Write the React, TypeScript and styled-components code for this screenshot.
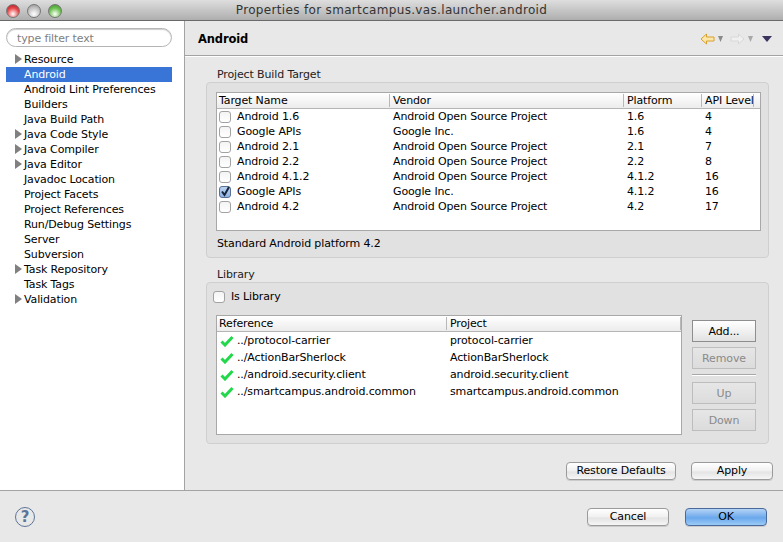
import * as React from "react";
import styled, { createGlobalStyle } from "styled-components";

const GlobalStyle = createGlobalStyle`
  html, body {
    margin: 0;
    padding: 0;
    background: #e8e8e8;
  }
  body {
    font-family: "DejaVu Sans", sans-serif;
    font-size: 11px;
    letter-spacing: -0.13px;
    color: #000;
  }
`;

const Window = styled.div`
  width: 783px;
  height: 542px;
  display: flex;
  flex-direction: column;
  overflow: hidden;
`;

const TitleBar = styled.div`
  height: 20px;
  flex: none;
  display: flex;
  align-items: center;
  position: relative;
  justify-content: center;
  background: linear-gradient(#dedede, #aeaeae);
  border-bottom: 1px solid #6a6a6a;
`;

const TrafficLights = styled.div`
  position: absolute;
  left: 6px;
  top: 4px;
  display: flex;
  gap: 7px;
`;

const Light = styled.span<{ $color: string; $edge: string }>`
  width: 12px;
  height: 12px;
  border-radius: 50%;
  background: radial-gradient(circle at 50% 75%, #fff 0%, ${(p) => p.$color} 55%, ${(p) => p.$edge} 100%);
  border: 0.5px solid #777;
`;

const Title = styled.div`
  font-size: 12px;
  color: #333;
  letter-spacing: 0.33px;
`;

const Main = styled.div`
  height: 470px;
  flex: none;
  box-sizing: border-box;
  display: flex;
  border-bottom: 1px solid #a3a3a3;
`;

const Sidebar = styled.div`
  width: 185px;
  flex: none;
  background: #fff;
  border-right: 1px solid #a3a3a3;
  padding: 7px 12px 0 6px;
  box-sizing: border-box;
`;

const Filter = styled.div`
  height: 19px;
  width: 166px;
  box-sizing: border-box;
  border: 1px solid #b5b5b5;
  border-radius: 10px;
  box-shadow: inset 0 1px 1px #ccc;
  padding-left: 10px;
  line-height: 19px;
  color: #808080;
  margin-bottom: 5px;
`;

const TreeRow = styled.div<{ $selected?: boolean }>`
  height: 15px;
  width: 166px;
  line-height: 15px;
  display: flex;
  align-items: center;
  padding-left: 18px;
  box-sizing: border-box;
  position: relative;
  white-space: nowrap;
  background: ${(p) => (p.$selected ? "#3875d7" : "transparent")};
  color: ${(p) => (p.$selected ? "#fff" : "#000")};
`;

const Twisty = styled.span`
  position: absolute;
  left: 9px;
  top: 2px;
  width: 0;
  height: 0;
  border-left: 7px solid #808080;
  border-top: 5px solid transparent;
  border-bottom: 5px solid transparent;
`;

const Content = styled.div`
  flex: 1;
  min-width: 0;
  display: flex;
  flex-direction: column;
  background: #e8e8e8;
`;

const Header = styled.div`
  height: 35px;
  flex: none;
  box-sizing: border-box;
  display: flex;
  align-items: center;
  justify-content: space-between;
  padding: 2px 11px 0 13px;
  border-bottom: 1px solid #a3a3a3;
  box-shadow: 0 1px 0 #fff;
`;

const HeaderTitle = styled.div`
  font-weight: bold;
  font-size: 11.5px;
`;

const NavIcons = styled.div`
  display: flex;
  align-items: center;
`;

const NavGap = styled.span<{ $width: number }>`
  width: ${(p) => p.$width}px;
`;

const Body = styled.div`
  flex: 1;
  padding: 11px 14px 0 21px;
  display: flex;
  flex-direction: column;
`;

const GroupLabel = styled.div`
  height: 15px;
  line-height: 15px;
  padding-left: 11px;
  color: #222;
`;

const GroupBox = styled.div<{ $height: number }>`
  height: ${(p) => p.$height}px;
  box-sizing: border-box;
  background: #e1e1e1;
  border: 1px solid #cfcfcf;
  border-radius: 4px;
  padding: 9px 7px 0 9px;
  margin-bottom: 9px;
`;

const Table = styled.div<{ $height: number; $width?: number }>`
  height: ${(p) => p.$height}px;
  ${(p) => (p.$width ? `width: ${p.$width}px;` : "")}
  flex: none;
  box-sizing: border-box;
  background: #fff;
  border: 1px solid #a8a8a8;
`;

const TableHead = styled.div`
  height: 15px;
  display: flex;
  align-items: center;
  background: linear-gradient(#fff, #ececec);
  border-bottom: 1px solid #b5b5b5;
`;

const HeadCell = styled.div<{ $width: number }>`
  width: ${(p) => p.$width}px;
  flex: none;
  box-sizing: border-box;
  padding-left: 3px;
  height: 13px;
  line-height: 13px;
  border-right: 1px solid #b8b8b8;
  white-space: nowrap;

  &:first-child {
    padding-left: 2px;
  }
`;

const TableRow = styled.div<{ $height: number }>`
  height: ${(p) => p.$height}px;
  display: flex;
  align-items: center;
  white-space: nowrap;
`;

const Cell = styled.div<{ $width: number }>`
  width: ${(p) => p.$width}px;
  flex: none;
  box-sizing: border-box;
  padding-left: 3px;
  display: flex;
  align-items: center;
`;

const Checkbox = styled.span<{ $checked?: boolean }>`
  width: 12px;
  height: 12px;
  flex: none;
  box-sizing: border-box;
  border-radius: 3px;
  display: inline-flex;
  align-items: center;
  justify-content: center;
  border: 1px solid ${(p) => (p.$checked ? "#5a6f94" : "#a2a2a2")};
  background: ${(p) =>
    p.$checked ? "linear-gradient(#bcd3f0, #8fb3e6)" : "linear-gradient(#f4f4f4, #fff)"};
`;

const RowCheck = styled(Checkbox)`
  margin: 0 6px 0 -1px;
`;

const Note = styled.div`
  margin-top: 5px;
  height: 15px;
  line-height: 15px;
  padding-left: 1px;
`;

const CheckLine = styled.div`
  display: flex;
  align-items: center;
  gap: 6px;
  height: 15px;
  margin: -3px 0 11px -3px;
`;

const LibraryRow = styled.div`
  display: flex;
  gap: 10px;
`;

const SideButtons = styled.div`
  width: 64px;
  flex: none;
  padding-top: 5px;
  display: flex;
  flex-direction: column;
`;

const SquareButton = styled.div<{ $disabled?: boolean }>`
  height: 22px;
  box-sizing: border-box;
  line-height: 21px;
  text-align: center;
  border: 1px solid ${(p) => (p.$disabled ? "#bdbdbd" : "#8e8e8e")};
  background: ${(p) =>
    p.$disabled ? "linear-gradient(#e6e6e6, #dcdcdc)" : "linear-gradient(#fff, #e2e2e2)"};
  color: ${(p) => (p.$disabled ? "#8a8a8a" : "#000")};
  margin-bottom: 5px;
`;

const ButtonSeparator = styled.div`
  height: 1px;
  background: #a8a8a8;
  border-bottom: 1px solid #fff;
  margin: 0 0 6px;
`;

const ActionRow = styled.div`
  display: flex;
  justify-content: flex-end;
  gap: 15px;
  margin: 9px -4px 0 0;
`;

const PushButton = styled.div<{ $width: number; $primary?: boolean }>`
  width: ${(p) => p.$width}px;
  height: 18px;
  box-sizing: border-box;
  border-radius: 4px;
  line-height: 16px;
  text-align: center;
  border: 1px solid ${(p) => (p.$primary ? "#4a6a9c" : "#9a9a9a")};
  background: ${(p) =>
    p.$primary
      ? "linear-gradient(#b5d3f5, #6aa8ec 55%, #9ccbf6)"
      : "linear-gradient(#fff, #f0f0f0 50%, #e4e4e4 55%, #f6f6f6)"};
  box-shadow: 0 1px 0 rgba(0, 0, 0, 0.12);
`;

const Footer = styled.div`
  flex: 1;
  display: flex;
  align-items: center;
  justify-content: space-between;
  padding: 0 16px 0 15px;
`;

const HelpCircle = styled.div`
  width: 20px;
  height: 20px;
  box-sizing: border-box;
  border: 1px solid #5d7498;
  border-radius: 50%;
  display: flex;
  align-items: center;
  justify-content: center;
  color: #5d7498;
  font-weight: bold;
  font-size: 15px;
`;

const FooterButtons = styled.div`
  display: flex;
  gap: 16px;
`;

const treeItems: [string, boolean][] = [
  ["Resource", true],
  ["Android", false],
  ["Android Lint Preferences", false],
  ["Builders", false],
  ["Java Build Path", false],
  ["Java Code Style", true],
  ["Java Compiler", true],
  ["Java Editor", true],
  ["Javadoc Location", false],
  ["Project Facets", false],
  ["Project References", false],
  ["Run/Debug Settings", false],
  ["Server", false],
  ["Subversion", false],
  ["Task Repository", true],
  ["Task Tags", false],
  ["Validation", true],
];

const AOSP = "Android Open Source Project";

const targets = [
  ["Android 1.6", AOSP, "1.6", "4"],
  ["Google APIs", "Google Inc.", "1.6", "4"],
  ["Android 2.1", AOSP, "2.1", "7"],
  ["Android 2.2", AOSP, "2.2", "8"],
  ["Android 4.1.2", AOSP, "4.1.2", "16"],
  ["Google APIs", "Google Inc.", "4.1.2", "16"],
  ["Android 4.2", AOSP, "4.2", "17"],
];

const references = [
  ["../protocol-carrier", "protocol-carrier"],
  ["../ActionBarSherlock", "ActionBarSherlock"],
  ["../android.security.client", "android.security.client"],
  ["../smartcampus.android.common", "smartcampus.android.common"],
];

const ArrowIcon = ({ right, active }: { right?: boolean; active?: boolean }) => (
  <svg width="15" height="12" viewBox="0 0 15 12">
    <path
      d={right ? "M14 6 8.5 1v3H1v4h7.5v3z" : "M1 6l5.5-5v3H14v4H6.5v3z"}
      fill={active ? "#fde7a8" : "#f0f0f0"}
      stroke={active ? "#d9a02e" : "#d8d8d8"}
    />
  </svg>
);

const SmallCaret = ({ color, w }: { color: string; w: number }) => (
  <svg width={w} height="6" viewBox={`0 0 ${w} 6`}>
    <path d={`M0 0h${w}L${w / 2} 6z`} fill={color} />
  </svg>
);

const GreenCheck = () => (
  <svg width="14" height="12" viewBox="0 0 14 12" style={{ marginRight: 3, flex: "none" }}>
    <path d="M1.5 6.5 5 10l7.5-8" fill="none" stroke="#22d84a" strokeWidth="3" />
  </svg>
);

const TickMark = () => (
  <svg width="12" height="12" viewBox="0 0 12 12" style={{ flex: "none" }}>
    <path d="M3 5.5 5.5 9 10 1" fill="none" stroke="#16243c" strokeWidth="2" />
  </svg>
);

export default function App() {
  return (
    <Window>
      <GlobalStyle />
      <TitleBar>
        <TrafficLights>
          <Light $color="#e8474a" $edge="#a5171c" />
          <Light $color="#c4c4c4" $edge="#8f8f8f" />
          <Light $color="#6cc24f" $edge="#3b8a2a" />
        </TrafficLights>
        <Title>Properties for smartcampus.vas.launcher.android</Title>
      </TitleBar>
      <Main>
        <Sidebar>
          <Filter>type filter text</Filter>
          {treeItems.map(([name, expandable]) => (
            <TreeRow key={name} $selected={name === "Android"}>
              {expandable && <Twisty />}
              {name}
            </TreeRow>
          ))}
        </Sidebar>
        <Content>
          <Header>
            <HeaderTitle>Android</HeaderTitle>
            <NavIcons>
              <ArrowIcon active />
              <NavGap $width={3} />
              <SmallCaret color="#8a8a8a" w={5} />
              <NavGap $width={7} />
              <ArrowIcon right />
              <NavGap $width={3} />
              <SmallCaret color="#a8a8a8" w={5} />
              <NavGap $width={9} />
              <SmallCaret color="#3a3560" w={10} />
            </NavIcons>
          </Header>
          <Body>
            <GroupLabel>Project Build Target</GroupLabel>
            <GroupBox $height={176}>
              <Table $height={139}>
                <TableHead>
                  <HeadCell $width={173}>Target Name</HeadCell>
                  <HeadCell $width={234}>Vendor</HeadCell>
                  <HeadCell $width={78}>Platform</HeadCell>
                  <HeadCell $width={52}>API Level</HeadCell>
                </TableHead>
                {targets.map((t, i) => (
                  <TableRow key={i} $height={15}>
                    <Cell $width={173}>
                      <RowCheck $checked={i === 5}>{i === 5 && <TickMark />}</RowCheck>
                      {t[0]}
                    </Cell>
                    <Cell $width={234}>{t[1]}</Cell>
                    <Cell $width={78}>{t[2]}</Cell>
                    <Cell $width={52}>{t[3]}</Cell>
                  </TableRow>
                ))}
              </Table>
              <Note>Standard Android platform 4.2</Note>
            </GroupBox>
            <GroupLabel>Library</GroupLabel>
            <GroupBox $height={162}>
              <CheckLine>
                <Checkbox />
                Is Library
              </CheckLine>
              <LibraryRow>
                <Table $height={120} $width={466}>
                  <TableHead>
                    <HeadCell $width={230}>Reference</HeadCell>
                    <HeadCell $width={234}>Project</HeadCell>
                  </TableHead>
                  {references.map((r) => (
                    <TableRow key={r[0]} $height={17}>
                      <Cell $width={230}>
                        <GreenCheck />
                        {r[0]}
                      </Cell>
                      <Cell $width={234}>{r[1]}</Cell>
                    </TableRow>
                  ))}
                </Table>
                <SideButtons>
                  <SquareButton>Add...</SquareButton>
                  <SquareButton $disabled>Remove</SquareButton>
                  <ButtonSeparator />
                  <SquareButton $disabled>Up</SquareButton>
                  <SquareButton $disabled>Down</SquareButton>
                </SideButtons>
              </LibraryRow>
            </GroupBox>
            <ActionRow>
              <PushButton $width={110}>Restore Defaults</PushButton>
              <PushButton $width={82}>Apply</PushButton>
            </ActionRow>
          </Body>
        </Content>
      </Main>
      <Footer>
        <HelpCircle>?</HelpCircle>
        <FooterButtons>
          <PushButton $width={82}>Cancel</PushButton>
          <PushButton $width={82} $primary>
            OK
          </PushButton>
        </FooterButtons>
      </Footer>
    </Window>
  );
}
